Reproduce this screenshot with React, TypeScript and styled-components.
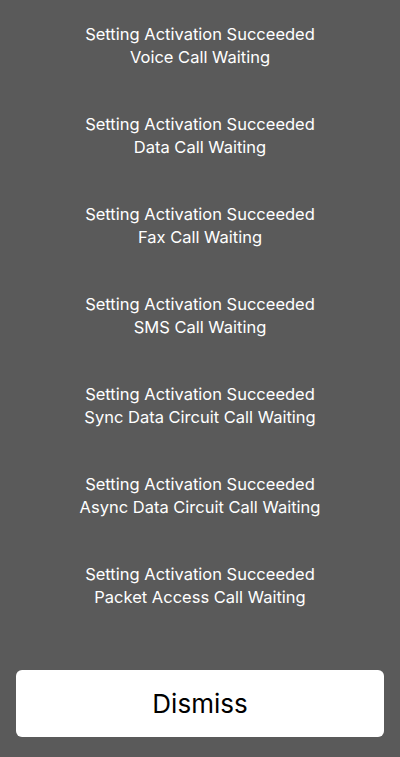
import React from 'react';
import styled, { createGlobalStyle } from 'styled-components';

const GlobalStyle = createGlobalStyle`
  html, body {
    margin: 0;
    padding: 0;
    background-color: #5a5a5a;
  }
`;

const messages = [
  'Voice Call Waiting',
  'Data Call Waiting',
  'Fax Call Waiting',
  'SMS Call Waiting',
  'Sync Data Circuit Call Waiting',
  'Async Data Circuit Call Waiting',
  'Packet Access Call Waiting',
];

export default function App() {
  return (
    <>
      <GlobalStyle />
      <Screen>
        <MessageList>
          {messages.map((m) => (
            <Message key={m}>
              Setting Activation Succeeded
              <br />
              {m}
            </Message>
          ))}
        </MessageList>
        <DismissButton>Dismiss</DismissButton>
      </Screen>
    </>
  );
}

const Screen = styled.div`
  width: 400px;
  height: 757px;
  box-sizing: border-box;
  background-color: #5a5a5a;
  display: flex;
  flex-direction: column;
  padding: 23px 16px 20px 16px;
  font-family: Inter, 'Liberation Sans', sans-serif;
`;

const MessageList = styled.div`
  display: flex;
  flex-direction: column;
  gap: 44px;
  flex: 1;
`;

const Message = styled.p`
  margin: 0;
  text-align: center;
  color: #ffffff;
  font-size: 16.5px;
  line-height: 23px;
`;

const DismissButton = styled.button`
  height: 67px;
  width: 100%;
  border: none;
  border-radius: 6px;
  background-color: #ffffff;
  color: #000000;
  font-family: Inter, 'Liberation Sans', sans-serif;
  font-size: 26px;
  cursor: pointer;
`;
